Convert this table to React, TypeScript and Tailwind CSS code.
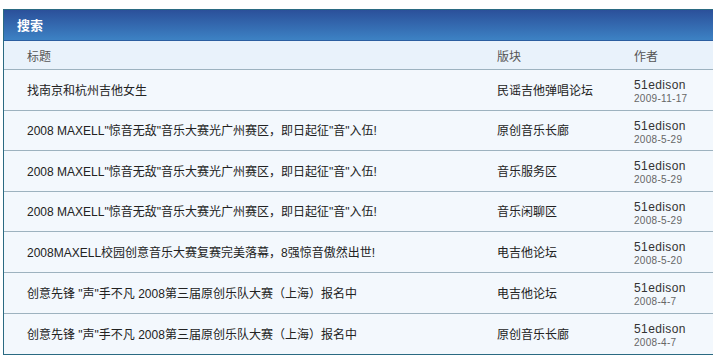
import React from "react";

const rows = [
  { t: "找南京和杭州吉他女生", b: "民谣吉他弹唱论坛", d: "2009-11-17", h: 41 },
  { t: "2008 MAXELL\"惊音无敌\"音乐大赛光广州赛区，即日起征\"音\"入伍!", b: "原创音乐长廊", d: "2008-5-29", h: 40 },
  { t: "2008 MAXELL\"惊音无敌\"音乐大赛光广州赛区，即日起征\"音\"入伍!", b: "音乐服务区", d: "2008-5-29", h: 41 },
  { t: "2008 MAXELL\"惊音无敌\"音乐大赛光广州赛区，即日起征\"音\"入伍!", b: "音乐闲聊区", d: "2008-5-29", h: 40 },
  { t: "2008MAXELL校园创意音乐大赛复赛完美落幕，8强惊音傲然出世!", b: "电吉他论坛", d: "2008-5-20", h: 41 },
  { t: "创意先锋 \"声\"手不凡 2008第三届原创乐队大赛（上海）报名中", b: "电吉他论坛", d: "2008-4-7", h: 41 },
  { t: "创意先锋 \"声\"手不凡 2008第三届原创乐队大赛（上海）报名中", b: "原创音乐长廊", d: "2008-4-7", h: 41 },
];

const font = { fontFamily: '"Liberation Sans", "Noto Sans CJK SC", sans-serif' };

export default function App() {
  return (
    <div className="w-[713px] h-[364px] overflow-hidden bg-white pt-[9px] pl-[3px]" style={font}>
      <div className="w-[730px] border border-[#2a6a82] border-r-0">
        <div className="h-[31px] bg-gradient-to-b from-[#2b509a] to-[#3d82c4] flex items-center pl-[13px] border-b border-[#2b5ea0]">
          <span className="text-white font-bold text-[13px] leading-none">搜索</span>
        </div>
        <div className="h-[29px] pt-[3px] bg-[#e9f2fb] grid grid-cols-[493px_137px_1fr] items-center text-[12px] text-[#555] border-b border-[#9db2bf]">
          <div className="pl-[23px]">标题</div>
          <div>版块</div>
          <div>作者</div>
        </div>
        {rows.map((r, i) => (
          <div
            key={i}
            className={`bg-[#f3f8fd] grid grid-cols-[493px_137px_1fr] items-center text-[12px] text-[#222] ${i < rows.length - 1 ? "border-b border-[#9db2bf]" : ""}`}
            style={{ height: i < rows.length - 1 ? r.h : r.h - 1 }}
          >
            <div className="pl-[23px] pt-[1px] whitespace-nowrap">{r.t}</div>
            <div className="pt-[1px]">{r.b}</div>
            <div className="flex flex-col leading-none pt-[3px]">
              <span className="text-[12px] text-[#333] tracking-[0.4px]">51edison</span>
              <span className="text-[10px] text-[#666] mt-[3px] tracking-[0.3px]">{r.d}</span>
            </div>
          </div>
        ))}
      </div>
    </div>
  );
}
